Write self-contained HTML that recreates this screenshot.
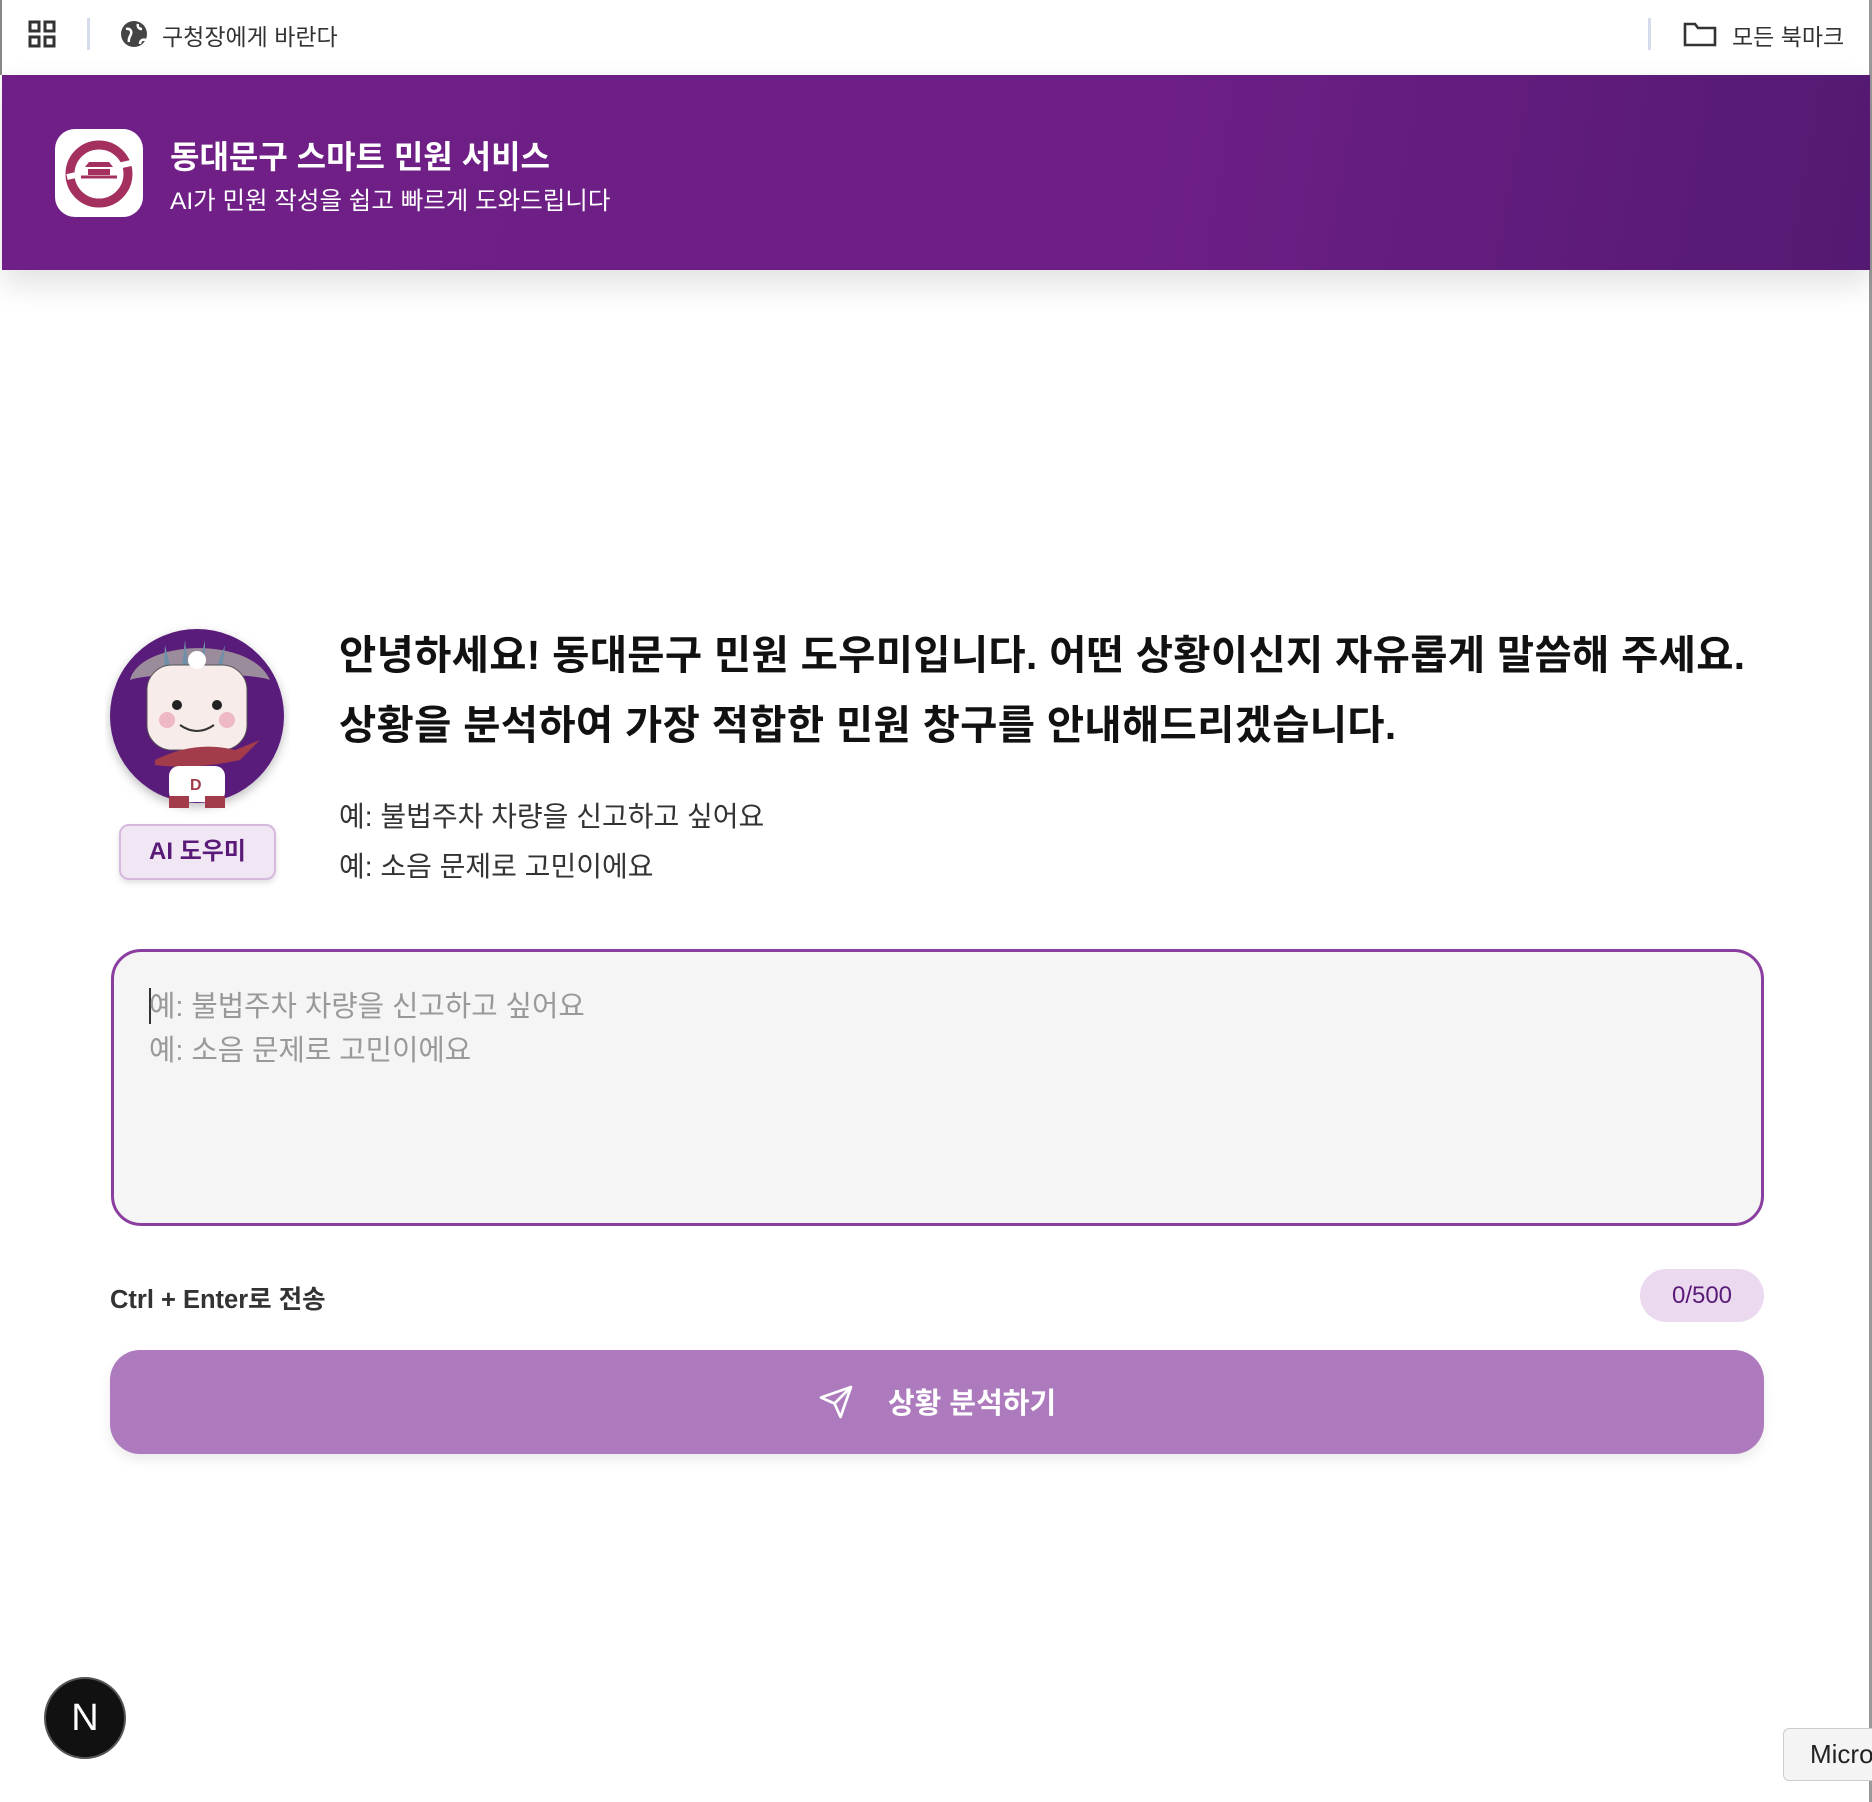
<!DOCTYPE html>
<html><head><meta charset="utf-8"><style>
*{margin:0;padding:0;box-sizing:border-box}
body{width:1872px;height:1802px;background:#fff;font-family:"Liberation Sans","Noto Sans CJK KR",sans-serif;position:relative;overflow:hidden;color:#222}
.a{position:absolute}
.top{left:0;top:0;width:1872px;height:75px;background:#fff;border-left:2px solid #888}
.hdr{left:2px;top:75px;width:1868px;height:195px;background:linear-gradient(100deg,#6f1f85 0%,#6e1f86 60%,#541973 100%);box-shadow:0 14px 30px rgba(0,0,0,.12)}
.logo{left:55px;top:129px;width:88px;height:88px;background:#fff;border-radius:20px}
</style></head><body>
<div class="a top"></div>
<svg class="a" style="left:28px;top:20px" width="28" height="28" viewBox="0 0 28 28" fill="none" stroke="#333" stroke-width="3"><rect x="2" y="2" width="9" height="9"/><rect x="17" y="2" width="9" height="9"/><rect x="2" y="17" width="9" height="9"/><rect x="17" y="17" width="9" height="9"/></svg>
<div class="a" style="left:87px;top:18px;width:3px;height:32px;background:#d5ddec"></div>
<svg class="a" style="left:120px;top:20px" width="28" height="28" viewBox="0 0 28 28"><circle cx="14" cy="14" r="13" fill="#444"/><path d="M6 9c4-1 6 2 5 5s-3 4-2 8M18 4c-1 3 1 5 4 5M20 24c0-4 3-5 6-4" stroke="#fff" stroke-width="2.5" fill="none"/></svg>
<div class="a" style="left:162px;top:18px;font-size:23px;color:#333">구청장에게 바란다</div>
<div class="a" style="left:1648px;top:18px;width:3px;height:32px;background:#d5ddec"></div>
<svg class="a" style="left:1683px;top:20px" width="34" height="28" viewBox="0 0 34 28" fill="none" stroke="#333" stroke-width="2.6"><path d="M2 4h10l3 4h17v17H2z"/></svg>
<div class="a" style="left:1732px;top:18px;font-size:23px;color:#333">모든 북마크</div>
<div class="a" style="left:1869px;top:0;width:3px;height:1802px;background:#999"></div>
<div class="a hdr"></div>
<div class="a logo"><svg width="88" height="88" viewBox="0 0 88 88"><circle cx="44" cy="45" r="29" fill="none" stroke="#a3305e" stroke-width="9"/><path d="M12 48l64-14" stroke="#fff" stroke-width="6"/><path d="M30 38h28l-4 -5h-20zM33 40h22v6h-22z" fill="#a3305e"/><path d="M26 48h36" stroke="#a3305e" stroke-width="3"/></svg></div>
<div class="a" style="left:170px;top:132px;font-size:32px;font-weight:bold;color:#fff">동대문구 스마트 민원 서비스</div>
<div class="a" style="left:170px;top:182px;font-size:24.5px;color:#fff">AI가 민원 작성을 쉽고 빠르게 도와드립니다</div>
<svg class="a" style="left:105px;top:620px" width="185" height="200" viewBox="0 0 185 200">
<defs><filter id="s"><feDropShadow dx="0" dy="4" stdDeviation="5" flood-opacity=".25"/></filter></defs>
<circle cx="92" cy="96" r="87" fill="#5a1a7a" filter="url(#s)"/>
<path d="M25 60c10-40 120-45 140 0-20-8-120-8-140 0z" fill="#9b8c9c"/>
<path d="M60 25l10 40h-12zM80 20l5 45h-10zM100 20l0 45h-10zM120 25l-5 40h-10z" fill="#6f8fa8"/>
<rect x="42" y="45" width="100" height="85" rx="25" fill="#f7ece9" stroke="#555"/>
<circle cx="92" cy="40" r="9" fill="#fff"/>
<circle cx="72" cy="85" r="5" fill="#222"/><circle cx="112" cy="85" r="5" fill="#222"/>
<circle cx="62" cy="100" r="8" fill="#eeb8c4"/><circle cx="122" cy="100" r="8" fill="#eeb8c4"/>
<path d="M75 105q17 12 34 0" stroke="#333" stroke-width="2" fill="none"/>
<path d="M50 140q40-20 80-10l25-10-20 20q-45 10-85 5z" fill="#a23b4a"/>
<rect x="64" y="146" width="56" height="36" rx="10" fill="#fff"/>
<path d="M64 176h20v12h-20zM100 176h20v12h-20z" fill="#a23b4a"/>
<text x="85" y="170" font-size="16" font-weight="bold" fill="#a23b4a" font-family="Liberation Sans">D</text>
</svg>
<div class="a" style="left:119px;top:824px;width:157px;height:56px;background:#f1e6f4;border:2px solid #d5b9de;border-radius:10px;box-shadow:0 3px 6px rgba(0,0,0,.12);font-size:24px;font-weight:bold;color:#5a1a78;text-align:center;line-height:52px">AI 도우미</div>
<div class="a" style="left:339px;top:620px;font-size:40.5px;font-weight:bold;line-height:70px;color:#111;white-space:nowrap;letter-spacing:0.3px">안녕하세요! 동대문구 민원 도우미입니다. 어떤 상황이신지 자유롭게 말씀해 주세요.<br>상황을 분석하여 가장 적합한 민원 창구를 안내해드리겠습니다.</div>
<div class="a" style="left:339px;top:792px;font-size:28px;line-height:50px;color:#333">예: 불법주차 차량을 신고하고 싶어요<br>예: 소음 문제로 고민이에요</div>
<div class="a" style="left:111px;top:949px;width:1653px;height:277px;border:3px solid #8a3fa0;border-radius:30px;background:#f5f5f5"></div>
<div class="a" style="left:149px;top:988px;width:2px;height:36px;background:#333"></div>
<div class="a" style="left:149px;top:985px;font-size:28.7px;line-height:44px;color:#999">예: 불법주차 차량을 신고하고 싶어요<br>예: 소음 문제로 고민이에요</div>
<div class="a" style="left:110px;top:1279px;font-size:25.5px;font-weight:bold;color:#333">Ctrl + Enter로 전송</div>
<div class="a" style="left:1640px;top:1269px;width:124px;height:53px;border-radius:27px;background:#ead9ef;color:#5a1a78;font-size:24px;text-align:center;line-height:53px">0/500</div>
<div class="a" style="left:110px;top:1350px;width:1654px;height:104px;border-radius:30px;background:#ad7bbd;box-shadow:0 6px 12px rgba(0,0,0,.08)"></div>
<svg class="a" style="left:818px;top:1384px" width="36" height="36" viewBox="0 0 24 24" fill="none" stroke="#fff" stroke-width="1.8" stroke-linejoin="round"><path d="M22 2L2 9l9 4 4 9z M22 2L11 13"/></svg>
<div class="a" style="left:888px;top:1380px;font-size:29px;font-weight:bold;color:#fff">상황 분석하기</div>
<div class="a" style="left:44px;top:1677px;width:82px;height:82px;border-radius:50%;background:#111;border:2px solid #555;color:#fff;font-size:38px;text-align:center;line-height:78px">N</div>
<div class="a" style="left:1783px;top:1728px;width:95px;height:53px;background:#f4f4f4;border:1px solid #ccc;border-radius:6px;font-size:26px;line-height:51px;padding-left:26px;color:#222">Micro</div>
</body></html>
